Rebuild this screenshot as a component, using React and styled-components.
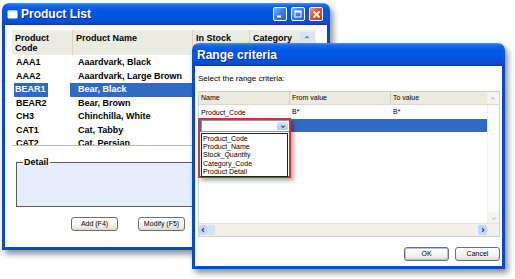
import React from "react";
import styled, { createGlobalStyle } from "styled-components";

const GlobalStyle = createGlobalStyle`
  html, body {
    margin: 0;
    padding: 0;
    background: #fff;
  }
  body {
    font-family: "Liberation Sans", Arial, sans-serif;
  }
`;

const Desktop = styled.div`
  position: relative;
  width: 515px;
  height: 279px;
  overflow: hidden;
  background: #fff;
`;

// windows sit on a free canvas, so they are placed by coordinates
const Window = styled.div`
  position: absolute;
  left: ${p => p.$x}px;
  top: ${p => p.$y}px;
  width: ${p => p.$w}px;
  height: ${p => p.$h}px;
  display: flex;
  flex-direction: column;
  border-radius: 7px 7px 0 0;
  box-shadow: 3px 4px 6px rgba(0, 0, 0, 0.45);
`;

const TitleBar = styled.div`
  flex: none;
  height: ${p => p.$h}px;
  display: flex;
  align-items: center;
  gap: 3px;
  padding: 0 7px 0 5px;
  border-radius: 7px 7px 0 0;
  background: linear-gradient(
    #4a92f8 0%,
    #1a68ea 10%,
    #0058e6 30%,
    #0455dd 70%,
    #0a4ccd 90%,
    #063cb0 100%
  );
  color: #fff;
  font-size: 12px;
  font-weight: bold;
  text-shadow: 1px 1px 0 #0b2f8a;
`;

const TitleText = styled.span`
  flex: 1;
  white-space: nowrap;
`;

const CtlButton = styled.div`
  width: 14px;
  height: 14px;
  box-sizing: border-box;
  border: 1px solid #fff;
  border-radius: 2px;
  display: flex;
  align-items: center;
  justify-content: center;
  background: ${p =>
    p.$close
      ? "linear-gradient(135deg, #f09a7a, #e0522a 45%, #c63a14)"
      : "linear-gradient(135deg, #7fb0fb, #3d7ef1 45%, #235fe0)"};
  & + & {
    margin-left: 1px;
  }
`;

const Client = styled.div`
  flex: 1;
  min-height: 0;
  display: flex;
  flex-direction: column;
  background: #fff;
  border: 3px solid #0a47cf;
  border-top: none;
  padding: ${p => p.$pad};
`;

/* ---------- product list grid ---------- */

const ProductGrid = styled.div`
  width: 304px;
  display: flex;
  flex-direction: column;
  border-bottom: 1px solid #b8b8b0;
`;

const cols = "61px 120px 57px 50px 16px";

const HeadRow = styled.div`
  display: grid;
  grid-template-columns: ${cols};
  height: 25px;
  background: #ecebe2;
  font-size: 9px;
  font-weight: bold;
  line-height: 10px;
  color: #000;
`;

const HeadCell = styled.div`
  padding: 3px 0 0 3px;
  border-right: 1px solid ${p => (p.$last ? "transparent" : "#d8d5c6")};
`;

const UpBtn = styled.div`
  margin: 2px 2px 0 0;
  height: 9px;
  display: flex;
  align-items: center;
  justify-content: center;
  background: #dbe3f3;
  border-radius: 2px;
`;

const GridBody = styled.div`
  height: 90px;
  box-sizing: border-box;
  padding-top: 1px;
  overflow: hidden;
`;

const Row = styled.div`
  display: grid;
  grid-template-columns: ${cols};
  height: 13.5px;
  line-height: 13.5px;
  font-size: 9px;
  font-weight: bold;
  color: #000;
`;

const Cell = styled.div`
  white-space: nowrap;
  overflow: hidden;
  background: ${p => (p.$sel ? "#316ac5" : "transparent")};
  color: ${p => (p.$sel ? "#fff" : "#000")};
  margin-left: ${p => (p.$sel ? -3 : 0)}px;
  padding-left: ${p => (p.$sel ? 8 : p.$first ? 4 : 5)}px;
`;

const SelText = styled.span`
  display: inline-block;
  background: #316ac5;
  color: #fff;
  padding: 0 2px 0 1px;
  margin-left: -2px;
`;

/* ---------- detail group ---------- */

const Group = styled.fieldset`
  margin: 11px 0 0 4px;
  padding: 0 0 5px 4px;
  height: 43px;
  border: 1px solid #5a5a5a;
  border-right: none;
  background: #e6ecfa;
  min-inline-size: 0;
`;

const Legend = styled.legend`
  padding: 0 1px;
  margin-left: 2px;
  font-size: 9px;
  font-weight: bold;
  color: #000;
  line-height: 10px;
`;

const DetailArea = styled.div`
  height: 100%;
  background: #fff;
  margin-top: 1px;
`;

const ButtonRow = styled.div`
  display: flex;
  gap: ${p => p.$gap}px;
  justify-content: ${p => (p.$end ? "flex-end" : "flex-start")};
  padding: ${p => p.$pad};
`;

const XPButton = styled.div`
  width: ${p => p.$w}px;
  height: 14px;
  box-sizing: border-box;
  border: 1px solid #6f6f6f;
  border-radius: 3px;
  background: linear-gradient(#ffffff, #f4f3ee 60%, #dcdad0);
  box-shadow: ${p => (p.$default ? "inset 0 0 0 1px #a9c2f0" : "none")};
  font-size: 7px;
  line-height: 12px;
  text-align: center;
  color: #000;
`;

/* ---------- range criteria dialog ---------- */

const Label = styled.div`
  margin-top: 8px;
  font-size: 8px;
  line-height: 10px;
  color: #000;
`;

const CriteriaGrid = styled.div`
  margin-top: 7px;
  width: 302px;
  height: 146px;
  box-sizing: border-box;
  border: 1px solid #cfcfc8;
  display: flex;
  flex-direction: column;
  font-size: 7px;
  color: #000;
`;

const ccols = "91px 101px 96px 12px";

const CHead = styled.div`
  display: grid;
  grid-template-columns: ${ccols};
  height: 12px;
  line-height: 12px;
  background: #ebeadf;
  border-bottom: 1px solid #dcd9cc;
`;

const CHeadCell = styled.div`
  padding-left: 2px;
  border-right: 1px solid ${p => (p.$last ? "transparent" : "#d3d0c2")};
`;

const FadedArrow = styled.div`
  height: ${p => (p.$h ? `${p.$h}px` : "auto")};
  display: flex;
  align-items: center;
  justify-content: center;
  background: #f4f3ef;
`;

const CBody = styled.div`
  flex: 1;
  display: flex;
  min-height: 0;
`;

const CRows = styled.div`
  flex: 1;
`;

const CRow = styled.div`
  display: grid;
  grid-template-columns: 91px 101px 96px;
  height: ${p => p.$h}px;
  line-height: ${p => p.$h}px;
  background: ${p => (p.$sel ? "#316ac5" : "transparent")};
`;

const CCell = styled.div`
  position: relative;
  padding-left: 2px;
  padding-top: ${p => p.$pt || 0}px;
`;

const VTrack = styled.div`
  width: 12px;
  display: flex;
  flex-direction: column;
  justify-content: flex-end;
  background: #fbfbf9;
  border-left: 1px solid #f0efe8;
`;

const HScroll = styled.div`
  height: 12px;
  display: flex;
  background: #f1f0ea;
  border-top: 1px solid #e4e3dc;
`;

const ScrollBtn = styled.div`
  width: ${p => p.$w}px;
  flex: none;
  display: flex;
  align-items: center;
  justify-content: center;
  background: ${p => p.$bg};
  border-radius: 2px;
  margin: 1px 0;
`;

const Spacer = styled.div`
  flex: 1;
`;

const Combo = styled.div`
  margin: 1px 0 0 0;
  width: 89px;
  height: 12px;
  box-sizing: border-box;
  border: 1px solid #7f9db9;
  background: #fff;
  display: flex;
  justify-content: flex-end;
  padding: 1px;
`;

const ComboBtn = styled.div`
  width: 11px;
  display: flex;
  align-items: center;
  justify-content: center;
  background: linear-gradient(#d5e2fc, #b4c9f5);
  border-radius: 1px;
`;

// highlight frame that lies over the grid
const Callout = styled.div`
  position: absolute;
  left: -1px;
  top: -1px;
  width: 93px;
  height: 60px;
  box-sizing: border-box;
  border: 2px solid #d5302c;
  box-shadow: 3px 3px 4px rgba(0, 0, 0, 0.3);
  padding: 13px 0 0 1px;
  pointer-events: none;
`;

const DropList = styled.div`
  width: 87px;
  box-sizing: border-box;
  border: 1px solid #222;
  background: #fff;
  padding: 1px 0 0 1px;
  font-size: 7px;
  line-height: 8.2px;
  color: #000;
`;

const Chevron = ({ dir = "up", color = "#4d6185", size = 7 }) => {
  const d = {
    up: "M1.5 5 L3.5 3 L5.5 5",
    down: "M1.5 3 L3.5 5 L5.5 3",
    left: "M4.5 1.5 L2.5 3.5 L4.5 5.5",
    right: "M2.5 1.5 L4.5 3.5 L2.5 5.5"
  }[dir];
  return (
    <svg width={size} height={size} viewBox="0 0 7 7">
      <path d={d} fill="none" stroke={color} strokeWidth="1.4" />
    </svg>
  );
};

const products = [
  ["AAA1", "Aaardvark, Black"],
  ["AAA2", "Aaardvark, Large Brown"],
  ["BEAR1", "Bear, Black"],
  ["BEAR2", "Bear, Brown"],
  ["CH3", "Chinchilla, White"],
  ["CAT1", "Cat, Tabby"],
  ["CAT2", "Cat, Persian"]
];

const fields = [
  "Product_Code",
  "Product_Name",
  "Stock_Quantity",
  "Category_Code",
  "Product Detail"
];

const AppIcon = () => (
  <svg width="11" height="9" viewBox="0 0 11 9">
    <rect x="0.5" y="0.5" width="10" height="8" rx="1.5" fill="#fff" />
    <rect x="0.5" y="0.5" width="10" height="2" rx="1" fill="#dfe9ff" />
  </svg>
);

export default function App() {
  return (
    <>
      <GlobalStyle />
      <Desktop>
        <Window $x={2} $y={3} $w={328} $h={247}>
          <TitleBar $h={22}>
            <AppIcon />
            <TitleText>Product List</TitleText>
            <CtlButton>
              <svg width="8" height="8" viewBox="0 0 8 8">
                <rect x="1" y="5.5" width="4" height="2" fill="#fff" />
              </svg>
            </CtlButton>
            <CtlButton>
              <svg width="8" height="8" viewBox="0 0 8 8">
                <rect x="1" y="1" width="6" height="6" fill="none" stroke="#fff" />
                <rect x="1" y="1" width="6" height="1.6" fill="#fff" />
              </svg>
            </CtlButton>
            <CtlButton $close>
              <svg width="9" height="9" viewBox="0 0 9 9">
                <path d="M1.5 1.5 L7.5 7.5 M7.5 1.5 L1.5 7.5" stroke="#fff" strokeWidth="1.8" />
              </svg>
            </CtlButton>
          </TitleBar>
          <Client $pad="5px 0 0 7px">
            <ProductGrid>
              <HeadRow>
                <HeadCell>Product<br />Code</HeadCell>
                <HeadCell>Product Name</HeadCell>
                <HeadCell>In Stock</HeadCell>
                <HeadCell $last>Category</HeadCell>
                <div>
                  <UpBtn>
                    <Chevron dir="up" color="#6a7fa8" size={6} />
                  </UpBtn>
                </div>
              </HeadRow>
              <GridBody>
                {products.map(([code, name]) => {
                  const sel = code === "BEAR1";
                  return (
                    <Row key={code}>
                      <Cell $first>{sel ? <SelText>{code}</SelText> : code}</Cell>
                      <Cell $sel={sel}>{name}</Cell>
                      <Cell $sel={sel} />
                      <Cell $sel={sel} />
                    </Row>
                  );
                })}
              </GridBody>
            </ProductGrid>
            <Group>
              <Legend>Detail</Legend>
              <DetailArea />
            </Group>
            <ButtonRow $gap={20} $pad="10px 0 0 59px">
              <XPButton $w={47}>Add (F4)</XPButton>
              <XPButton $w={47}>Modify (F5)</XPButton>
            </ButtonRow>
          </Client>
        </Window>

        <Window $x={192} $y={43} $w={313} $h={226}>
          <TitleBar $h={23}>
            <TitleText>Range criteria</TitleText>
          </TitleBar>
          <Client $pad="0 0 0 3px">
            <Label>Select the range criteria:</Label>
            <CriteriaGrid>
              <CHead>
                <CHeadCell>Name</CHeadCell>
                <CHeadCell>From value</CHeadCell>
                <CHeadCell $last>To value</CHeadCell>
                <FadedArrow>
                  <Chevron dir="up" color="#c9c9c0" size={6} />
                </FadedArrow>
              </CHead>
              <CBody>
                <CRows>
                  <CRow $h={14}>
                    <CCell $pt={1}>Product_Code</CCell>
                    <CCell>B*</CCell>
                    <CCell>B*</CCell>
                  </CRow>
                  <CRow $h={13} $sel>
                    <CCell>
                      <Combo>
                        <ComboBtn>
                          <Chevron dir="down" color="#3a5aa8" size={6} />
                        </ComboBtn>
                      </Combo>
                      <Callout>
                        <DropList>
                          {fields.map(f => (
                            <div key={f}>{f}</div>
                          ))}
                        </DropList>
                      </Callout>
                    </CCell>
                    <CCell />
                    <CCell />
                  </CRow>
                </CRows>
                <VTrack>
                  <FadedArrow $h={11}>
                    <Chevron dir="down" color="#c9c9c0" size={6} />
                  </FadedArrow>
                </VTrack>
              </CBody>
              <HScroll>
                <ScrollBtn $w={8} $bg="#c5d6fa">
                  <Chevron dir="left" color="#2c4f9e" size={6} />
                </ScrollBtn>
                <ScrollBtn $w={8} $bg="#d6e1f8" />
                <Spacer />
                <ScrollBtn $w={9} $bg="#c5d6fa">
                  <Chevron dir="right" color="#2c4f9e" size={6} />
                </ScrollBtn>
                <ScrollBtn $w={12} $bg="#f1f0ea" />
              </HScroll>
            </CriteriaGrid>
            <ButtonRow $gap={6} $end $pad="10px 2px 0 0">
              <XPButton $w={45} $default>OK</XPButton>
              <XPButton $w={45}>Cancel</XPButton>
            </ButtonRow>
          </Client>
        </Window>
      </Desktop>
    </>
  );
}
